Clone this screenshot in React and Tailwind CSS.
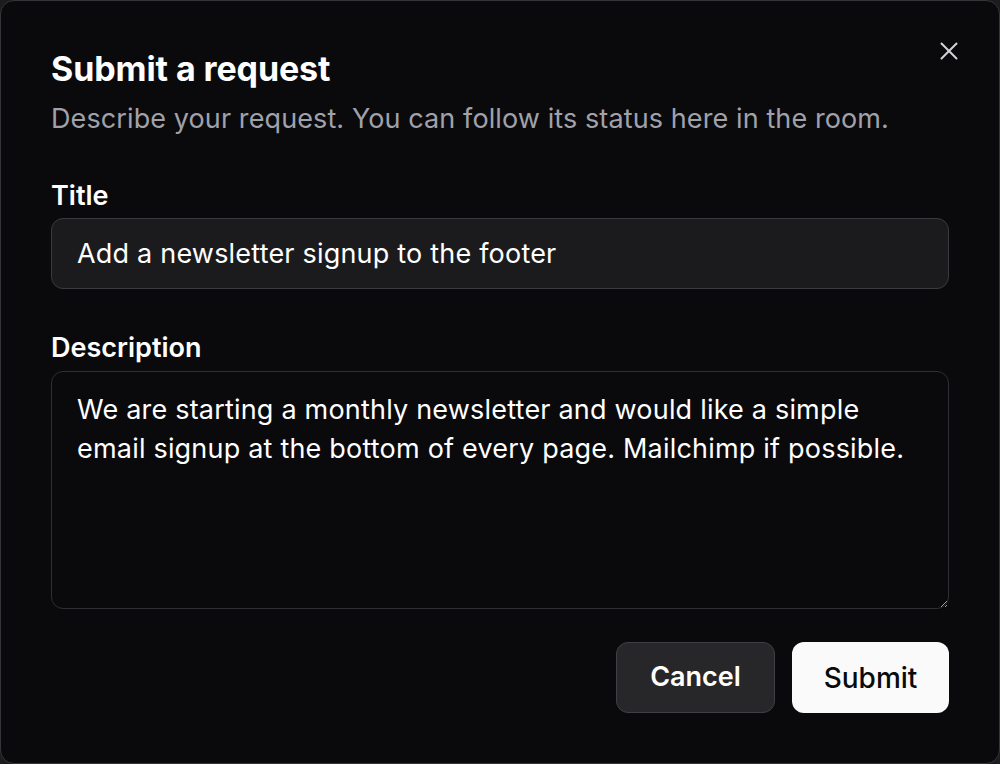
import React from 'react';
import { X } from 'lucide-react';

const App = () => {
  return (
    <div className="h-[764px] w-[1000px] bg-[#1c1c1e]" style={{ fontFamily: 'Inter, "Noto Sans", sans-serif' }}>
      <div className="relative flex h-full w-full flex-col rounded-[14px] border-[1.5px] border-[#35353a] bg-[#0a0a0c] px-[50px] pt-[46px] text-white">
        <button className="absolute right-[35px] top-[35px] text-[#d4d4d8]">
          <X size={30} strokeWidth={1.6} />
        </button>

        <h2 className="text-[34px] font-bold leading-[44px] tracking-[-0.1px]">Submit a request</h2>
        <p className="mt-[12px] text-[27px] leading-[32px] tracking-[0.1px] text-[#a1a1aa]">
          Describe your request. You can follow its status here in the room.
        </p>

        <label className="mt-[45px] text-[27px] font-semibold leading-[32px]">Title</label>
        <input
          readOnly
          value="Add a newsletter signup to the footer"
          className="mt-[6px] h-[71px] w-full rounded-[12px] border-[1.5px] border-[#3a3a3f] bg-[#1b1b1e] px-[25px] text-[27px] tracking-[0.2px] text-white outline-none"
        />

        <label className="mt-[43px] text-[27px] font-semibold leading-[32px]">Description</label>
        <textarea
          readOnly
          value="We are starting a monthly newsletter and would like a simple email signup at the bottom of every page. Mailchimp if possible."
          className="mt-[7px] h-[238px] w-full resize-y rounded-[12px] border-[1.5px] border-[#2e2e33] bg-[#0a0a0c] pl-[25px] pr-[28px] pt-[18px] text-[27px] leading-[39px] tracking-[0.2px] text-white outline-none"
        />

        <div className="mt-[33px] flex justify-end gap-[17px]">
          <button className="h-[71px] w-[159px] rounded-[12px] border-[1.5px] border-[#3f3f46] bg-[#27272a] text-[27px] font-semibold text-white">
            Cancel
          </button>
          <button className="h-[71px] w-[157px] rounded-[12px] bg-[#fafafa] text-[28px] font-medium text-[#0a0a0a]">
            Submit
          </button>
        </div>
      </div>
    </div>
  );
};

export default App;
